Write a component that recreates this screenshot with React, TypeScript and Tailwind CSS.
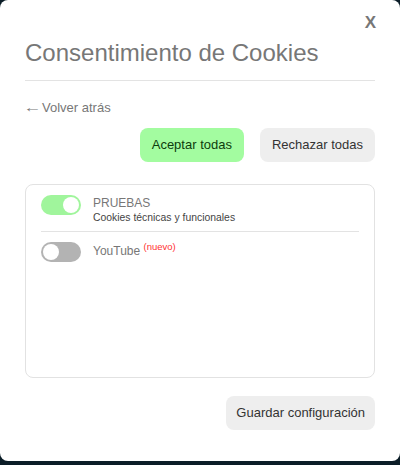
import { useState } from "react";

const Toggle = ({ on, onClick }: { on: boolean; onClick: () => void }) => (
    <button
        type="button"
        onClick={onClick}
        className={`relative w-10 h-5 rounded-full shrink-0 ${on ? "bg-[#a0f59c]" : "bg-[#b3b3b3]"}`}
    >
        <span
            className={`absolute top-[2px] w-4 h-4 rounded-full bg-white ${on ? "left-[22px]" : "left-[2px]"}`}
        />
    </button>
);

export default function App() {
    const [pruebas, setPruebas] = useState(true);
    const [youtube, setYoutube] = useState(false);

    return (
        <div className="w-[400px] h-[465px] bg-[#0b1d27] font-['Liberation_Sans',Arial,sans-serif]">
            <div className="w-[400px] h-[461px] bg-white rounded-lg px-[25px] flex flex-col">
                <div className="flex justify-end pt-[11px] h-[34px]">
                    <button className="text-[17px] font-bold text-[#777] leading-none mr-[-1px]">X</button>
                </div>

                <h2 className="text-[24px] leading-7 text-[#777] mt-[5px]">Consentimiento de Cookies</h2>
                <div className="h-px bg-[#e3e3e3] mt-[13px]" />

                <a className="text-[13px] text-[#777] mt-[19px] leading-4 flex items-center">
                    <span className="inline-block scale-x-[1.4] origin-left ml-[-2px] mr-[6px]">←</span>Volver atrás
                </a>

                <div className="flex justify-end gap-4 mt-[12px]">
                    <button className="h-[34px] px-3 rounded-lg bg-[#a3fca0] text-[#0d3d0d] text-[13px]">
                        Aceptar todas
                    </button>
                    <button className="h-[34px] px-3 rounded-lg bg-[#eeeeee] text-[#333] text-[13px]">
                        Rechazar todas
                    </button>
                </div>

                <div className="mt-[22px] h-[194px] border border-[#e2e2e2] rounded-lg px-[15px] pt-[10px]">
                    <div className="flex items-start gap-3 pb-[7px] border-b border-[#e3e3e3]">
                        <Toggle on={pruebas} onClick={() => setPruebas(!pruebas)} />
                        <div className="flex flex-col">
                            <span className="text-[12px] leading-4 text-[#777]">PRUEBAS</span>
                            <span className="text-[10.4px] leading-3 text-[#444] mt-[1px]">Cookies técnicas y funcionales</span>
                        </div>
                    </div>
                    <div className="flex items-start gap-3 pt-[10px]">
                        <Toggle on={youtube} onClick={() => setYoutube(!youtube)} />
                        <span className="text-[12px] leading-4 text-[#777] mt-[1px]">
                            YouTube <sup className="text-[9.5px] text-[#f33]">(nuevo)</sup>
                        </span>
                    </div>
                </div>

                <div className="flex justify-end mt-[18px]">
                    <button className="h-[34px] px-[10px] rounded-lg bg-[#eeeeee] text-[#333] text-[13px]">
                        Guardar configuración
                    </button>
                </div>
            </div>
        </div>
    );
}
